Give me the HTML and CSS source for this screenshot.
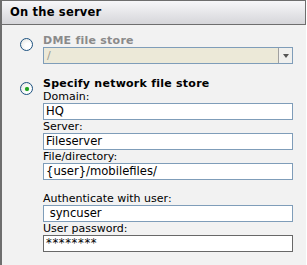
FILE: index.html
```html
<!doctype html>
<html>
  <head>
    <meta charset="utf-8" />
    <title>On the server</title>
    <link rel="stylesheet" href="styles.css">
  </head>
  <body>
    <div class="panel">
        <div class="panel-header">On the server</div>
        <div class="panel-body">
            <div class="option">
                <span class="radio"></span>
                <div class="option-content">
                    <div class="option-title disabled">DME file store</div>
                    <div class="select disabled">
                        <span class="select-value">/</span>
                        <span class="select-button"></span>
                    </div>
                </div>
            </div>

            <div class="option">
                <span class="radio checked"></span>
                <div class="option-content">
                    <div class="option-title">Specify network file store</div>
                    <label class="field-label">Domain:</label>
                    <div class="field">HQ</div>
                    <label class="field-label">Server:</label>
                    <div class="field">Fileserver</div>
                    <label class="field-label">File/directory:</label>
                    <div class="field">{user}/mobilefiles/</div>

                    <label class="field-label spaced">Authenticate with user:</label>
                    <div class="field">&nbsp;syncuser</div>
                    <label class="field-label">User password:</label>
                    <div class="field password">********</div>
                </div>
            </div>
        </div>
    </div>
  </body>
</html>
```

FILE: styles.css
```css
body {
    margin: 0;
    background: #fff;
    font-family: "DejaVu Sans", Verdana, sans-serif;
    font-size: 11px;
    color: #000;
}
.panel {
    width: 304px;
    height: 265px;
    background: #f2f2f2;
    border-left: 2px solid #6e6e6e;
}
.panel-header {
    height: 23px;
    line-height: 23px;
    padding-left: 8px;
    font-weight: bold;
    font-size: 11.5px;
    letter-spacing: 0.2px;
    background: linear-gradient(#f7f7f9, #d6d6da);
    border: 1px solid #6e6e6e;
    border-left: 0;
}
.panel-body {
    padding: 9px 0 0 18px;
}
.option {
    display: flex;
    gap: 10px;
    margin-bottom: 13px;
}
.radio {
    flex: none;
    width: 11px;
    height: 11px;
    margin-top: 4px;
    border: 1px solid #1c5180;
    border-radius: 50%;
    background: radial-gradient(circle at 65% 65%, #fff 30%, #e0e0da 100%);
    display: flex;
    align-items: center;
    justify-content: center;
}
.radio.checked {
    margin-top: 5px;
}
.radio.checked::after {
    content: "";
    width: 4px;
    height: 4px;
    border-radius: 50%;
    background: #21a121;
    box-shadow: 0 0 1px #5ed45e;
}
.option-content {
    width: 250px;
}
.option-title {
    font-weight: bold;
    line-height: 13px;
    letter-spacing: 0.25px;
}
.option-title.disabled {
    color: #8a8a8a;
}
.field-label {
    display: block;
    line-height: 13px;
}
.field-label.spaced {
    margin-top: 12px;
}
.field {
    box-sizing: border-box;
    height: 17px;
    line-height: 15px;
    padding-left: 2px;
    background: #fff;
    border: 1px solid #7f9db9;
    font-size: 11.6px;
}
.field.password {
    border-color: #686868;
    letter-spacing: 0.6px;
}
.select {
    box-sizing: border-box;
    height: 17px;
    display: flex;
    border: 1px solid #7f9db9;
    background: #ece9d8;
    color: #9a9a90;
}
.select-value {
    flex: 1;
    padding-left: 3px;
    line-height: 15px;
}
.select-button {
    width: 13px;
    border-left: 1px solid #a0a0a0;
    background: #f0f0ee;
    display: flex;
    align-items: center;
    justify-content: center;
}
.select-button::after {
    content: "";
    border-left: 3px solid transparent;
    border-right: 3px solid transparent;
    border-top: 4px solid #555;
}
```
